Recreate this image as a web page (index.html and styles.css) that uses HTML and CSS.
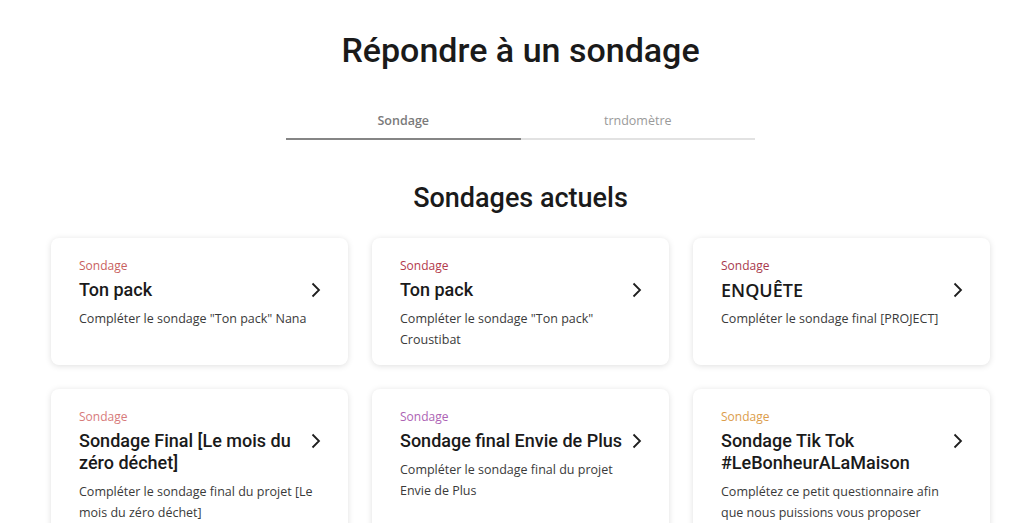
FILE: index.html
```html
<!DOCTYPE html>
<html lang="fr">
<head>
<meta charset="utf-8">
<title>Répondre à un sondage</title>
<link rel="stylesheet" href="styles.css">
</head>
<body>
<main class="page">
  <h1 class="title">Répondre à un sondage</h1>
  <nav class="tabs">
    <div class="tab active">Sondage</div>
    <div class="tab">trndomètre</div>
  </nav>
  <h2 class="subtitle">Sondages actuels</h2>
  <section class="grid">
    <a class="card">
      <div class="card-body">
        <div class="label c1">Sondage</div>
        <div class="head">
          <div class="card-title">Ton pack</div>
          <svg class="chev" width="20" height="22" viewBox="0 0 20 22"><path d="M6.5 4.5 L13 11 L6.5 17.5" fill="none" stroke="#1e1e1e" stroke-width="1.8"/></svg>
        </div>
        <p class="desc">Compléter le sondage "Ton pack" Nana</p>
      </div>
    </a>
    <a class="card">
      <div class="card-body">
        <div class="label c2">Sondage</div>
        <div class="head">
          <div class="card-title">Ton pack</div>
          <svg class="chev" width="20" height="22" viewBox="0 0 20 22"><path d="M6.5 4.5 L13 11 L6.5 17.5" fill="none" stroke="#1e1e1e" stroke-width="1.8"/></svg>
        </div>
        <p class="desc">Compléter le sondage "Ton pack" Croustibat</p>
      </div>
    </a>
    <a class="card">
      <div class="card-body">
        <div class="label c3">Sondage</div>
        <div class="head">
          <div class="card-title alt">ENQUÊTE</div>
          <svg class="chev" width="20" height="22" viewBox="0 0 20 22"><path d="M6.5 4.5 L13 11 L6.5 17.5" fill="none" stroke="#1e1e1e" stroke-width="1.8"/></svg>
        </div>
        <p class="desc">Compléter le sondage final [PROJECT]</p>
      </div>
    </a>
    <a class="card">
      <div class="card-body">
        <div class="label c4">Sondage</div>
        <div class="head">
          <div class="card-title">Sondage Final [Le mois du zéro déchet]</div>
          <svg class="chev" width="20" height="22" viewBox="0 0 20 22"><path d="M6.5 4.5 L13 11 L6.5 17.5" fill="none" stroke="#1e1e1e" stroke-width="1.8"/></svg>
        </div>
        <p class="desc">Compléter le sondage final du projet [Le mois du zéro déchet]</p>
      </div>
    </a>
    <a class="card">
      <div class="card-body">
        <div class="label c5">Sondage</div>
        <div class="head">
          <div class="card-title">Sondage final Envie de Plus</div>
          <svg class="chev" width="20" height="22" viewBox="0 0 20 22"><path d="M6.5 4.5 L13 11 L6.5 17.5" fill="none" stroke="#1e1e1e" stroke-width="1.8"/></svg>
        </div>
        <p class="desc">Compléter le sondage final du projet Envie de Plus</p>
      </div>
    </a>
    <a class="card">
      <div class="card-body">
        <div class="label c6">Sondage</div>
        <div class="head">
          <div class="card-title">Sondage Tik Tok #LeBonheurALaMaison</div>
          <svg class="chev" width="20" height="22" viewBox="0 0 20 22"><path d="M6.5 4.5 L13 11 L6.5 17.5" fill="none" stroke="#1e1e1e" stroke-width="1.8"/></svg>
        </div>
        <p class="desc">Complétez ce petit questionnaire afin que nous puissions vous proposer d'autres contenus adaptés</p>
      </div>
    </a>
  </section>
</main>
</body>
</html>
```
FILE: styles.css
```css
* { box-sizing: border-box; }
html, body { margin: 0; padding: 0; background: #fff; }
body { font-family: "Open Sans", "Liberation Sans", sans-serif; color: #1a1a1a; overflow: hidden; }

.page {
  width: 939px;
  margin-left: 51px;
  display: flex;
  flex-direction: column;
  align-items: center;
}

.title {
  margin: 30px 0 0;
  font-family: Roboto, "Liberation Sans", sans-serif;
  font-weight: 500;
  font-size: 34px;
  line-height: 40px;
  color: #1a1a1a;
}

.tabs {
  margin-top: 42px;
  width: 469px;
  display: flex;
}
.tab {
  flex: 1;
  text-align: center;
  font-size: 12.5px;
  line-height: 18px;
  padding-bottom: 8px;
  color: #9a9a9a;
  border-bottom: 2px solid #e2e2e2;
}
.tab.active {
  color: #7a7a7a;
  font-weight: 600;
  border-bottom-color: #858585;
}

.subtitle {
  margin: 42px 0 0;
  font-family: Roboto, "Liberation Sans", sans-serif;
  font-weight: 500;
  font-size: 27px;
  line-height: 32px;
  color: #1a1a1a;
}

.grid {
  margin-top: 24px;
  width: 100%;
  display: grid;
  grid-template-columns: repeat(3, 297px);
  column-gap: 24px;
  row-gap: 24px;
}

.card {
  display: block;
  background: #fff;
  border-radius: 8px;
  box-shadow: 0 1px 6px rgba(0, 0, 0, 0.13);
  text-decoration: none;
  color: inherit;
}
.card-body {
  padding: 20px 22px 15px 28px;
}

.label {
  font-size: 12px;
  line-height: 16px;
}
.c1 { color: #c85f60; }
.c2 { color: #b33a4c; }
.c3 { color: #a83a4e; }
.c4 { color: #d77b7b; }
.c5 { color: #ad63b4; }
.c6 { color: #dc9d4b; }

.head {
  margin-top: 5px;
  display: flex;
  align-items: flex-start;
}
.card-title {
  flex: 1;
  font-family: Roboto, "Liberation Sans", sans-serif;
  font-weight: 500;
  font-size: 18px;
  line-height: 22px;
  color: #1a1a1a;
}
.card-title.alt {
  font-family: "Open Sans", "Liberation Sans", sans-serif;
  font-weight: 600;
}
.chev { flex: none; display: block; }

.desc {
  margin: 7px 0 0;
  padding-right: 7px;
  font-size: 12.5px;
  line-height: 21px;
  color: #3a3a3a;
}
```
